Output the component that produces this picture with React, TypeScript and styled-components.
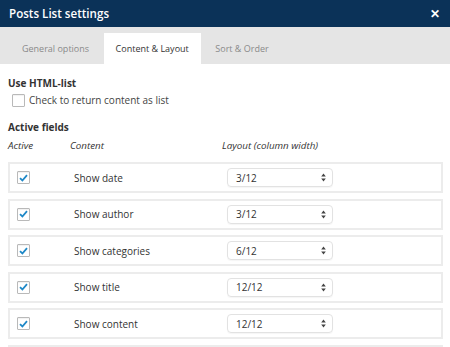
import React from 'react';
import styled, { createGlobalStyle } from 'styled-components';

const GlobalStyle = createGlobalStyle`
  body {
    margin: 0;
    background: #ffffff;
    font-family: "Open Sans", "Liberation Sans", sans-serif;
    color: #333;
  }
`;

const Modal = styled.div`
  width: 450px;
  height: 347px;
  overflow: hidden;
  background: #fff;
`;

const Header = styled.div`
  height: 27px;
  background: #0b3258;
  display: flex;
  align-items: center;
  justify-content: space-between;
  padding: 0 10px 0 9px;
  box-sizing: border-box;
`;

const Title = styled.h1`
  margin: 0;
  font-size: 11.6px;
  font-weight: 600;
  color: #fff;
`;

const Close = styled.span`
  color: #fff;
  font-size: 12px;
  font-weight: 700;
  line-height: 1;
`;

const TabBar = styled.div`
  height: 37px;
  background: #e5e5e5;
  display: flex;
  align-items: flex-end;
  padding-left: 10px;
  gap: 2.5px;
`;

const Tab = styled.div<{ $active?: boolean }>`
  height: 31px;
  padding: 0 12px;
  display: flex;
  align-items: center;
  font-size: 9px;
  color: ${(p) => (p.$active ? '#333' : '#8a8a8a')};
  background: ${(p) => (p.$active ? '#fff' : 'transparent')};
`;

const Body = styled.div`
  padding: 12px 7px 0 8px;
`;

const SectionTitle = styled.div`
  font-size: 10px;
  font-weight: 700;
  line-height: 15px;
  color: #333;
`;

const CheckLine = styled.label`
  display: flex;
  align-items: center;
  gap: 4px;
  margin: 2px 0 0 4px;
  font-size: 10px;
  line-height: 15px;
  color: #444;
`;

const Box = styled.span`
  width: 11px;
  height: 11px;
  border: 1px solid #b9b9b9;
  border-radius: 1px;
  background: #fff;
  display: inline-flex;
  align-items: center;
  justify-content: center;
  flex-shrink: 0;
  box-shadow: inset 0 1px 1px rgba(0, 0, 0, 0.06);
`;

const FieldsTitle = styled(SectionTitle)`
  margin-top: 12px;
`;

const HeadRow = styled.div`
  display: grid;
  grid-template-columns: 62px 152px 1fr;
  font-size: 9.8px;
  font-style: italic;
  color: #333;
  line-height: 15px;
  margin-top: 3px;
`;

const List = styled.div`
  margin-top: 9px;
  display: flex;
  flex-direction: column;
  gap: 5.5px;
`;

const Row = styled.div`
  height: 31px;
  flex-shrink: 0;
  box-sizing: border-box;
  border: 2px solid #ececec;
  display: grid;
  grid-template-columns: 57px 153px 1fr;
  align-items: center;
  padding-left: 7px;
`;

const RowLabel = styled.span`
  font-size: 10px;
  color: #333;
`;

const Select = styled.div`
  width: 106px;
  height: 19px;
  box-sizing: border-box;
  border: 1px solid #e2e2e2;
  border-radius: 4px;
  display: flex;
  align-items: center;
  justify-content: space-between;
  padding: 0 6px 0 8px;
  font-size: 10px;
  color: #333;
  box-shadow: 0 1px 1px rgba(0, 0, 0, 0.04);
`;

const Check = () => (
  <svg width="9" height="8" viewBox="0 0 9 8">
    <path d="M1 4.2 L3.4 6.5 L8 1.2" fill="none" stroke="#1e88c7" strokeWidth="1.8" />
  </svg>
);

const Arrows = () => (
  <svg width="5" height="9" viewBox="0 0 5 9">
    <path d="M2.5 0.5 L4.8 3.5 H0.2 Z M2.5 8.5 L4.8 5.5 H0.2 Z" fill="#444" />
  </svg>
);

const fields = [
  { label: 'Show date', layout: '3/12' },
  { label: 'Show author', layout: '3/12' },
  { label: 'Show categories', layout: '6/12' },
  { label: 'Show title', layout: '12/12' },
  { label: 'Show content', layout: '12/12' },
];

export default function App() {
  return (
    <>
      <GlobalStyle />
      <Modal>
        <Header>
          <Title>Posts List settings</Title>
          <Close>✕</Close>
        </Header>
        <TabBar>
          <Tab>General options</Tab>
          <Tab $active>Content &amp; Layout</Tab>
          <Tab>Sort &amp; Order</Tab>
        </TabBar>
        <Body>
          <SectionTitle>Use HTML-list</SectionTitle>
          <CheckLine>
            <Box />
            Check to return content as list
          </CheckLine>
          <FieldsTitle>Active fields</FieldsTitle>
          <HeadRow>
            <span>Active</span>
            <span>Content</span>
            <span>Layout (column width)</span>
          </HeadRow>
          <List>
            {fields.map((f) => (
              <Row key={f.label}>
                <Box>
                  <Check />
                </Box>
                <RowLabel>{f.label}</RowLabel>
                <Select>
                  {f.layout}
                  <Arrows />
                </Select>
              </Row>
            ))}
            {/* next row is only partly visible under the fold */}
            <Row />
          </List>
        </Body>
      </Modal>
    </>
  );
}
